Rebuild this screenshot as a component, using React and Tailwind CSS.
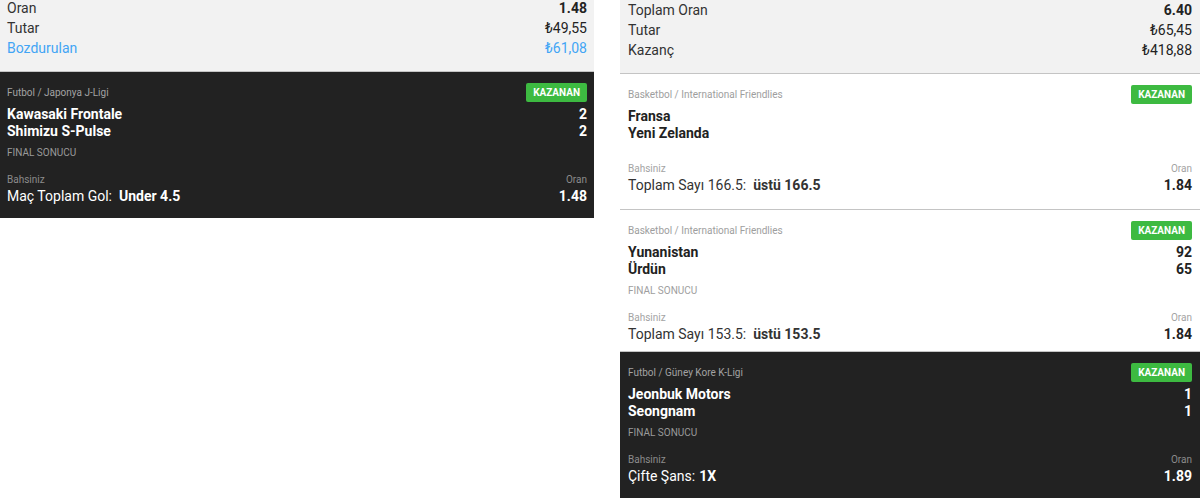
const LEFT_SUMMARY = [
  { label: 'Oran', value: '1.48', bold: true },
  { label: 'Tutar', value: '₺49,55' },
  { label: 'Bozdurulan', value: '₺61,08', blue: true },
]

const RIGHT_SUMMARY = [
  { label: 'Toplam Oran', value: '6.40', bold: true },
  { label: 'Tutar', value: '₺65,45' },
  { label: 'Kazanç', value: '₺418,88' },
]

const RIGHT_BETS = [
  {
    league: 'Basketbol / International Friendlies',
    teams: [['Fransa', ''], ['Yeni Zelanda', '']],
    final: false,
    market: 'Toplam Sayı 166.5:',
    pick: 'üstü 166.5',
    gap: 'ml-[7px]',
    odds: '1.84',
    dark: false,
    pb: 'pb-[14px]',
  },
  {
    league: 'Basketbol / International Friendlies',
    teams: [['Yunanistan', '92'], ['Ürdün', '65']],
    final: true,
    market: 'Toplam Sayı 153.5:',
    pick: 'üstü 153.5',
    gap: 'ml-[7px]',
    odds: '1.84',
    dark: false,
    pb: 'pb-[7px]',
  },
  {
    league: 'Futbol / Güney Kore K-Ligi',
    teams: [['Jeonbuk Motors', '1'], ['Seongnam', '1']],
    final: true,
    market: 'Çifte Şans:',
    pick: '1X',
    gap: 'ml-[4px]',
    odds: '1.89',
    dark: true,
    pb: 'pb-[12px]',
  },
]

function Summary({ rows, pad }) {
  return (
    <div className={`bg-[#f2f2f2] border-b border-[#c4c4c4] pb-[13px] ${pad}`}>
      {rows.map((r) => (
        <div key={r.label} className="flex justify-between text-[14px] leading-[20px]">
          <span className={r.blue ? 'text-[#42a5f5]' : 'text-[#333]'}>{r.label}</span>
          <span className={`${r.blue ? 'text-[#42a5f5]' : 'text-[#222]'} ${r.bold ? 'font-bold' : ''}`}>{r.value}</span>
        </div>
      ))}
    </div>
  )
}

function BetCard({ bet, px }) {
  const dark = bet.dark
  return (
    <div
      className={`${px} pt-[11px] ${bet.pb} ${
        dark ? 'bg-[#222222] text-white' : 'bg-white text-[#222] border-b border-[#c4c4c4]'
      }`}
    >
      {/* league + status */}
      <div className="flex items-center justify-between h-[19px]">
        <span className={`text-[10px] ${dark ? 'text-[#a3a3a3]' : 'text-[#9e9e9e]'}`}>{bet.league}</span>
        <span className="h-[19px] px-[7px] flex items-center rounded-[2px] bg-[#3dba41] text-white text-[10px] font-bold">
          KAZANAN
        </span>
      </div>

      {/* teams */}
      <div className="mt-[4px]">
        {bet.teams.map(([name, score]) => (
          <div key={name} className="flex justify-between text-[14px] leading-[17px] font-bold">
            <span>{name}</span>
            <span>{score}</span>
          </div>
        ))}
      </div>

      {bet.final && (
        <p className={`mt-[6px] text-[10px] leading-[14px] ${dark ? 'text-[#9a9a9a]' : 'text-[#9e9e9e]'}`}>FINAL SONUCU</p>
      )}

      {/* your bet */}
      <div className={bet.final ? 'mt-[13px]' : 'mt-[20px]'}>
        <div className={`flex justify-between text-[10px] leading-[13px] ${dark ? 'text-[#8c8c8c]' : 'text-[#a3a3a3]'}`}>
          <span>Bahsiniz</span>
          <span>Oran</span>
        </div>
        <div className="flex justify-between text-[14px] leading-[20px]">
          <span className={dark ? 'text-white' : 'text-[#333]'}>
            {bet.market}
            <b className={`font-bold ${bet.gap}`}>{bet.pick}</b>
          </span>
          <span className="font-bold">{bet.odds}</span>
        </div>
      </div>
    </div>
  )
}

export default function App() {
  return (
    <div className="h-[499px] overflow-hidden bg-white flex items-start gap-[26px] font-['Roboto','Liberation_Sans',sans-serif]">
      {/* Left slip */}
      <div className="w-[594px] -mt-[2px]">
        <Summary rows={LEFT_SUMMARY} pad="px-[7px]" />
        <BetCard
          px="px-[7px]"
          bet={{
            league: 'Futbol / Japonya J-Ligi',
            teams: [['Kawasaki Frontale', '2'], ['Shimizu S-Pulse', '2']],
            final: true,
            market: 'Maç Toplam Gol:',
            pick: 'Under 4.5',
            gap: 'ml-[7px]',
            odds: '1.48',
            dark: true,
            pb: 'pb-[12px]',
          }}
        />
      </div>

      {/* Right slip */}
      <div className="w-[580px]">
        <Summary rows={RIGHT_SUMMARY} pad="px-[8px]" />
        {RIGHT_BETS.map((b, i) => (
          <BetCard key={i} bet={b} px="px-[8px]" />
        ))}
      </div>
    </div>
  )
}
